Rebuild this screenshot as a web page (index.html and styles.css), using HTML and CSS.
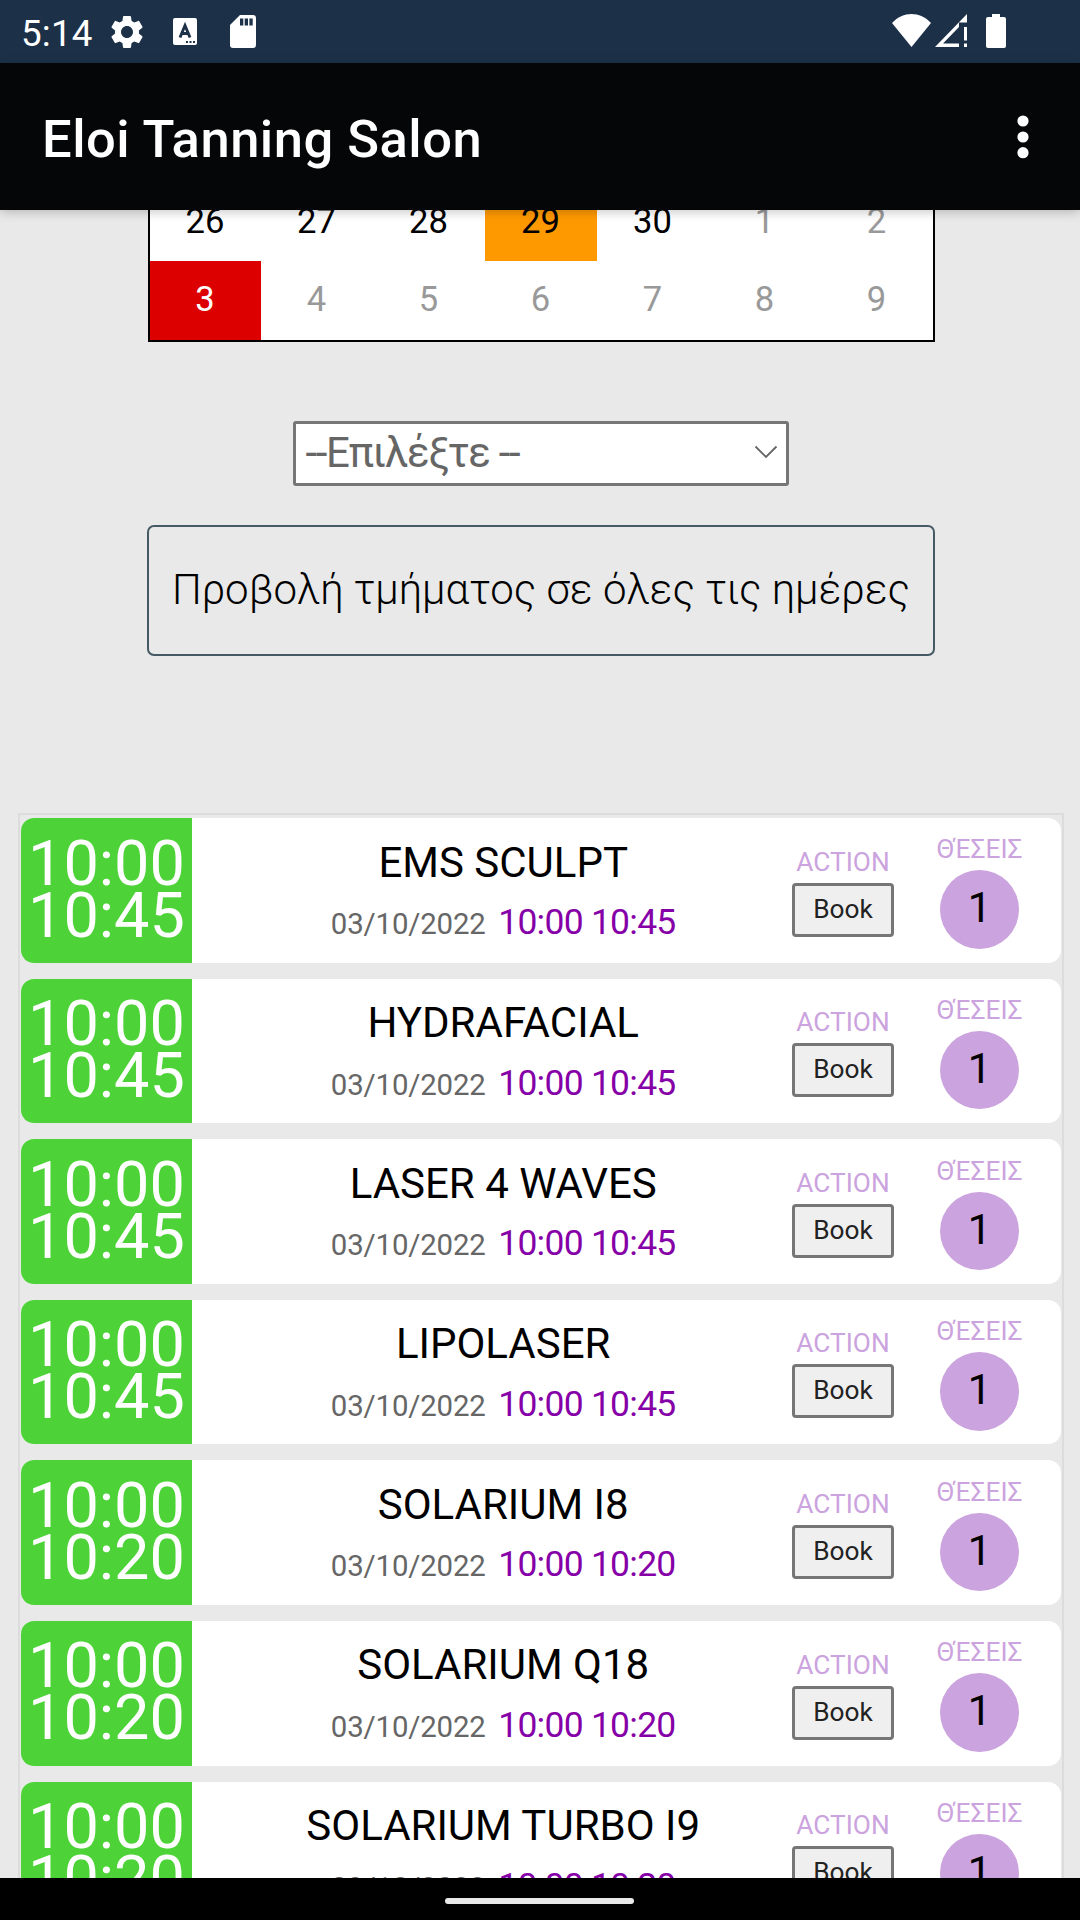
FILE: index.html
```html
<!DOCTYPE html>
<html lang="el">
<head>
<meta charset="utf-8">
<title>Eloi Tanning Salon</title>
<link rel="stylesheet" href="styles.css">
</head>
<body>
<div class="status-bar">
  <span class="clock">5:14</span>
  <svg class="icon-gear" width="40" height="40" viewBox="0 0 24 24" fill="#fff"><path d="M19.14 12.94c.04-.3.06-.61.06-.94 0-.32-.02-.64-.07-.94l2.03-1.58c.18-.14.23-.41.12-.61l-1.92-3.32c-.12-.22-.37-.29-.59-.22l-2.39.96c-.5-.38-1.03-.7-1.62-.94l-.36-2.54c-.04-.24-.24-.41-.48-.41h-3.84c-.24 0-.43.17-.47.41l-.36 2.54c-.59.24-1.13.57-1.62.94l-2.39-.96c-.22-.08-.47 0-.59.22L2.74 8.87c-.12.21-.08.47.12.61l2.03 1.58c-.05.3-.09.63-.09.94s.02.64.07.94l-2.03 1.58c-.18.14-.23.41-.12.61l1.92 3.32c.12.22.37.29.59.22l2.39-.96c.5.38 1.03.7 1.62.94l.36 2.54c.05.24.24.41.48.41h3.84c.24 0 .44-.17.47-.41l.36-2.54c.59-.24 1.13-.56 1.62-.94l2.39.96c.22.08.47 0 .59-.22l1.92-3.32c.12-.22.07-.47-.12-.61l-2.01-1.58zM12 15.6c-1.98 0-3.6-1.62-3.6-3.6s1.62-3.6 3.6-3.6 3.6 1.62 3.6 3.6-1.62 3.6-3.6 3.6z"/></svg>
  <svg class="icon-input" width="24" height="27" viewBox="0 0 24 27"><rect width="24" height="27" rx="2" fill="#fff"/><path d="M7 19.500L12 7.500L17 19.500M9 15.500H15" fill="none" stroke="#1d3148" stroke-width="2.900"/><path d="M13 23h2v2h-2zM16.500 23h2v2h-2zM20 23h2v2h-2z" fill="#1d3148"/></svg>
  <svg class="icon-sd" width="26" height="33" viewBox="0 0 26 33"><path d="M10 0H23a3 3 0 0 1 3 3V30a3 3 0 0 1-3 3H3a3 3 0 0 1-3-3V10z" fill="#fff"/><path d="M10 3.500h3.300v7H10zM14.700 3.500H18v7h-3.300zM19.400 3.500h3.300v7h-3.300z" fill="#1d3148"/></svg>
  <svg class="icon-wifi" width="39" height="33" viewBox="0 0 39 33"><path d="M0 9C11-3 28-3 39 9L19.500 33z" fill="#fff"/></svg>
  <svg class="icon-signal" width="33" height="33" viewBox="0 0 33 33" fill="#fff"><path d="M32 0V8.500H24V13L8 29.500H24V33H0z"/><path d="M29 13h3v13.500h-3zM29 29.500h3V33h-3z"/></svg>
  <svg class="icon-battery" width="20" height="34" viewBox="0 0 20 34"><path d="M6 0h8v3h4a2 2 0 0 1 2 2v27a2 2 0 0 1-2 2H2a2 2 0 0 1-2-2V5a2 2 0 0 1 2-2h4z" fill="#fff"/></svg>
</div>
<header class="app-bar">
  <h1 class="app-title">Eloi Tanning Salon</h1>
  <svg width="12" height="44" viewBox="0 0 12 44" fill="#fff"><circle cx="6" cy="6" r="5.600"/><circle cx="6" cy="22" r="5.600"/><circle cx="6" cy="37.700" r="5.600"/></svg>
</header>
<main class="content">
  <div class="calendar">
    <span class="day">26</span><span class="day">27</span><span class="day">28</span><span class="day today">29</span><span class="day">30</span><span class="day other">1</span><span class="day other">2</span>
    <span class="day selected">3</span><span class="day other">4</span><span class="day other">5</span><span class="day other">6</span><span class="day other">7</span><span class="day other">8</span><span class="day other">9</span>
  </div>
  <div class="dropdown"><span>--Επιλέξτε --</span><svg width="24" height="14" viewBox="0 0 24 14"><path d="M1.500 1.500L12 12L22.500 1.500" fill="none" stroke="#666" stroke-width="1.800"/></svg></div>
  <div class="show-all">Προβολή τμήματος σε όλες τις ημέρες</div>
  <div class="slots">
    <article class="slot">
      <div class="slot-time">10:00<br>10:45</div>
      <div class="slot-info"><div class="slot-name">EMS SCULPT</div><div class="slot-when"><span class="date">03/10/2022</span><span class="hours">10:00 10:45</span></div></div>
      <div class="slot-action"><span class="label">ACTION</span><span class="book">Book</span></div>
      <div class="slot-seats"><span class="label">ΘΈΣΕΙΣ</span><span class="count">1</span></div>
    </article>
    <article class="slot">
      <div class="slot-time">10:00<br>10:45</div>
      <div class="slot-info"><div class="slot-name">HYDRAFACIAL</div><div class="slot-when"><span class="date">03/10/2022</span><span class="hours">10:00 10:45</span></div></div>
      <div class="slot-action"><span class="label">ACTION</span><span class="book">Book</span></div>
      <div class="slot-seats"><span class="label">ΘΈΣΕΙΣ</span><span class="count">1</span></div>
    </article>
    <article class="slot">
      <div class="slot-time">10:00<br>10:45</div>
      <div class="slot-info"><div class="slot-name">LASER 4 WAVES</div><div class="slot-when"><span class="date">03/10/2022</span><span class="hours">10:00 10:45</span></div></div>
      <div class="slot-action"><span class="label">ACTION</span><span class="book">Book</span></div>
      <div class="slot-seats"><span class="label">ΘΈΣΕΙΣ</span><span class="count">1</span></div>
    </article>
    <article class="slot">
      <div class="slot-time">10:00<br>10:45</div>
      <div class="slot-info"><div class="slot-name">LIPOLASER</div><div class="slot-when"><span class="date">03/10/2022</span><span class="hours">10:00 10:45</span></div></div>
      <div class="slot-action"><span class="label">ACTION</span><span class="book">Book</span></div>
      <div class="slot-seats"><span class="label">ΘΈΣΕΙΣ</span><span class="count">1</span></div>
    </article>
    <article class="slot">
      <div class="slot-time">10:00<br>10:20</div>
      <div class="slot-info"><div class="slot-name">SOLARIUM I8</div><div class="slot-when"><span class="date">03/10/2022</span><span class="hours">10:00 10:20</span></div></div>
      <div class="slot-action"><span class="label">ACTION</span><span class="book">Book</span></div>
      <div class="slot-seats"><span class="label">ΘΈΣΕΙΣ</span><span class="count">1</span></div>
    </article>
    <article class="slot">
      <div class="slot-time">10:00<br>10:20</div>
      <div class="slot-info"><div class="slot-name">SOLARIUM Q18</div><div class="slot-when"><span class="date">03/10/2022</span><span class="hours">10:00 10:20</span></div></div>
      <div class="slot-action"><span class="label">ACTION</span><span class="book">Book</span></div>
      <div class="slot-seats"><span class="label">ΘΈΣΕΙΣ</span><span class="count">1</span></div>
    </article>
    <article class="slot">
      <div class="slot-time">10:00<br>10:20</div>
      <div class="slot-info"><div class="slot-name">SOLARIUM TURBO I9</div><div class="slot-when"><span class="date">03/10/2022</span><span class="hours">10:00 10:20</span></div></div>
      <div class="slot-action"><span class="label">ACTION</span><span class="book">Book</span></div>
      <div class="slot-seats"><span class="label">ΘΈΣΕΙΣ</span><span class="count">1</span></div>
    </article>
  </div>
</main>
<footer class="nav-bar"><div class="nav-pill"></div></footer>
</body>
</html>
```
FILE: styles.css
```css
* { box-sizing: border-box; }

body {
  margin: 0;
  width: 1080px;
  height: 1920px;
  display: flex;
  flex-direction: column;
  overflow: hidden;
  background: #e9e9e9;
  font-family: Roboto, "Noto Sans", sans-serif;
}

svg { display: block; flex: none; }

.status-bar {
  flex: none;
  height: 63px;
  padding-left: 21px;
  display: flex;
  align-items: center;
  background: #1c3148;
  color: #fff;
}
.clock { width: 86px; padding-top: 4px; font-size: 36.75px; line-height: 40px; letter-spacing: .2px; }
.icon-gear { margin-right: 26px; }
.icon-input { margin-right: 33px; }
.icon-wifi { margin: 0 4px 2px auto; }
.icon-signal { margin: 0 18px 2px 0; }
.icon-battery { margin: 0 74px 1px 0; }

.app-bar {
  flex: none;
  height: 147px;
  padding: 0 51.5px 0 42px;
  display: flex;
  align-items: center;
  justify-content: space-between;
  position: relative;
  z-index: 1;
  background: #040608;
  color: #fff;
  box-shadow: 0 2px 10px rgba(0, 0, 0, .22);
}
.app-title { margin: 0; padding-top: 4px; font-size: 52.5px; line-height: 60px; font-weight: 500; letter-spacing: .5px; }

.content {
  flex: 1;
  min-height: 0;
  overflow: hidden;
  display: flex;
  flex-direction: column;
  align-items: center;
}

.calendar {
  flex: none;
  width: 787px;
  margin: -28px 0 79px 3px;
  display: grid;
  grid-template-columns: 111px repeat(5, 112px) 1fr;
  grid-auto-rows: 79px;
  border: 2px solid #000;
  border-top: 0;
  background: #fff;
}
.day { padding: 0 1px 4px 0; display: flex; align-items: center; justify-content: center; font-size: 34.6px; color: #000; }
.day:nth-child(-n+7) { padding-bottom: 2px; }
.today { background: #ff9900; }
.selected { background: #dc0000; color: #fff; }
.other { color: #999; }

.dropdown {
  flex: none;
  width: 496px;
  height: 65px;
  margin-left: 2px;
  padding: 0 8px 3px 9.5px;
  display: flex;
  align-items: center;
  justify-content: space-between;
  border: 3px solid #767676;
  border-radius: 3px;
  background: #fff;
  color: #666;
  font-size: 42px;
  letter-spacing: -1.3px;
}

.show-all {
  flex: none;
  width: 788px;
  height: 131px;
  margin: 39px 0 157px 2px;
  padding-bottom: 3px;
  display: flex;
  align-items: center;
  justify-content: center;
  border: 2px solid #455a64;
  border-radius: 7px;
  color: #000;
  font-size: 42px;
  font-weight: 300;
  white-space: nowrap;
}

.slots {
  flex: none;
  width: 1046px;
  margin-left: 2px;
  padding: 3px 1px;
  display: flex;
  flex-direction: column;
  gap: 16px;
  border: 2px solid #dcdcdc;
}
.slot {
  height: 144.6px;
  display: grid;
  grid-template-columns: 171px 590px 122px 1fr;
  overflow: hidden;
  border-radius: 13px;
  background: #fff;
}
.slot-time {
  padding-top: 19.5px;
  background: #4dd338;
  color: #fff;
  font-size: 63px;
  line-height: 52px;
  text-align: center;
}
.slot-info { padding: 19.5px 0 0 32.4px; text-align: center; }
.slot-name { font-size: 42px; line-height: 50px; color: #000; }
.slot-when { display: flex; justify-content: center; align-items: baseline; gap: 12.5px; padding-top: 4.5px; line-height: 60px; }
.date { font-size: 29.4px; color: #666; letter-spacing: -.15px; }
.hours { font-size: 35.5px; color: #8600a8; letter-spacing: -.75px; }

.slot-action, .slot-seats { display: flex; flex-direction: column; align-items: center; gap: 6px; }
.slot-action { padding-top: 28.6px; }
.slot-seats { padding: 16.4px 6px 0 0; }
.label { font-size: 26.25px; line-height: 30px; color: #cba3de; }
.book {
  width: 102px;
  height: 54px;
  border: 3px solid #767676;
  border-radius: 4px;
  background: #efefef;
  color: #222;
  font-size: 26.25px;
  line-height: 46px;
  text-align: center;
}
.count {
  width: 79px;
  height: 78.5px;
  border-radius: 50%;
  background: #cba3de;
  color: #000;
  font-size: 42px;
  line-height: 76px;
  text-align: center;
}

.nav-bar {
  flex: none;
  height: 42px;
  display: flex;
  justify-content: center;
  padding: 20px 1px 0 0;
  background: #000;
}
.nav-pill { width: 189px; height: 6px; border-radius: 3px; background: #e9e9e9; }
```
